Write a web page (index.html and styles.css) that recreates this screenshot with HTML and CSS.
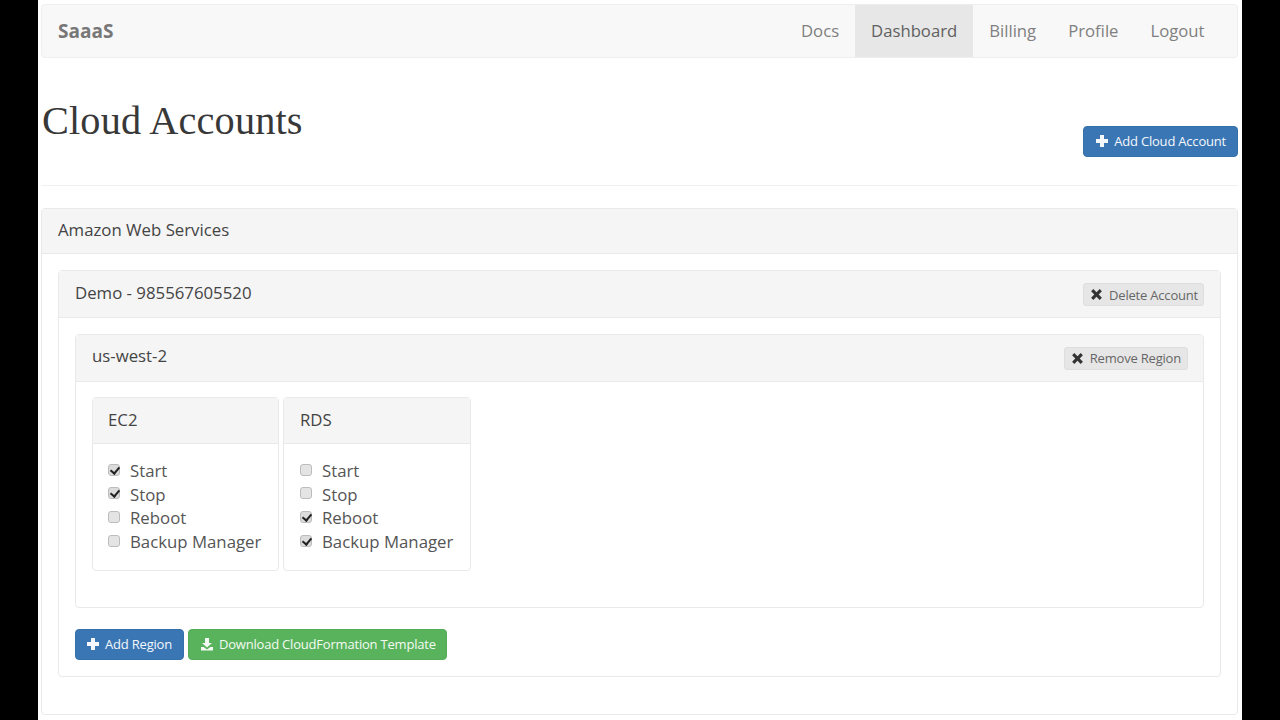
FILE: index.html
```html
<!DOCTYPE html>
<html lang="en">
<head>
<meta charset="utf-8">
<title>Cloud Accounts</title>
<link rel="stylesheet" href="styles.css">
</head>
<body>
<svg class="defs" width="0" height="0" aria-hidden="true">
  <symbol id="i-plus" viewBox="0 0 14 14"><path d="M5 1h4v4h4v4H9v4H5V9H1V5h4z"/></symbol>
  <symbol id="i-x" viewBox="0 0 14 14"><path d="M3.6 1.2 7 4.6l3.4-3.4 2.4 2.4L9.4 7l3.4 3.4-2.4 2.4L7 9.4l-3.4 3.4-2.4-2.4L4.6 7 1.2 3.6z"/></symbol>
  <symbol id="i-down" viewBox="0 0 14 14"><path d="M5 1h4v5h3L7 10.6 2 6h3zM1 10h2.6L7 12.6 10.4 10H13v3.4H1z"/></symbol>
</svg>
<div class="page">
  <nav class="navbar">
    <a class="brand">SaaaS</a>
    <ul class="nav">
      <li><a>Docs</a></li>
      <li class="active"><a>Dashboard</a></li>
      <li><a>Billing</a></li>
      <li><a>Profile</a></li>
      <li><a>Logout</a></li>
    </ul>
  </nav>
  <header class="page-header">
    <h1>Cloud Accounts</h1>
    <a class="btn btn-primary btn-add-account"><svg class="ico ico-plus"><use href="#i-plus"/></svg>Add Cloud Account</a>
  </header>
  <section class="panel panel-aws">
    <div class="panel-heading heading-aws">Amazon Web Services</div>
    <div class="panel-body">
      <section class="panel panel-account">
        <div class="panel-heading heading-row"><span class="title">Demo - 985567605520</span>
          <a class="btn btn-sm btn-default"><svg class="ico ico-x"><use href="#i-x"/></svg>Delete Account</a>
        </div>
        <div class="panel-body">
          <section class="panel panel-region">
            <div class="panel-heading heading-row heading-region"><span class="title">us-west-2</span>
              <a class="btn btn-sm btn-default"><svg class="ico ico-x"><use href="#i-x"/></svg>Remove Region</a>
            </div>
            <div class="panel-body services">
              <section class="panel service service-ec2">
                <div class="panel-heading heading-service">EC2</div>
                <div class="service-body">
                  <label class="check"><input type="checkbox" checked>Start</label>
                  <label class="check"><input type="checkbox" checked>Stop</label>
                  <label class="check"><input type="checkbox">Reboot</label>
                  <label class="check"><input type="checkbox">Backup Manager</label>
                </div>
              </section>
              <section class="panel service service-rds">
                <div class="panel-heading heading-service">RDS</div>
                <div class="service-body">
                  <label class="check"><input type="checkbox">Start</label>
                  <label class="check"><input type="checkbox">Stop</label>
                  <label class="check"><input type="checkbox" checked>Reboot</label>
                  <label class="check"><input type="checkbox" checked>Backup Manager</label>
                </div>
              </section>
            </div>
          </section>
          <div class="actions">
            <a class="btn btn-primary"><svg class="ico ico-plus"><use href="#i-plus"/></svg>Add Region</a>
            <a class="btn btn-success"><svg class="ico ico-plus"><use href="#i-down"/></svg>Download CloudFormation Template</a>
          </div>
        </div>
      </section>
    </div>
  </section>
</div>
</body>
</html>
```
FILE: styles.css
```css
* { box-sizing: border-box; }
html, body { margin: 0; height: 720px; overflow: hidden; background: #000; }
body { font-family: "Open Sans", "Liberation Sans", sans-serif; font-size: 16px; color: #333; }
.defs { position: absolute; }
.page { width: 1204px; height: 720px; margin-left: 38px; padding: 4px 4px 0 3px; background: #fff; overflow: hidden; }

.navbar { display: flex; justify-content: space-between; height: 54px; background: #f8f8f8; border: 1px solid #eeeeee; border-radius: 4px; }
.brand { padding: 0 16px; line-height: 52px; font-size: 19px; font-weight: 700; color: #777; }
.nav { display: flex; list-style: none; margin: 0 16.5px 0 0; padding: 0; }
.nav a { display: block; padding: 0 16px; line-height: 52px; font-size: 16.7px; color: #808080; }
.nav .active a { background: #e7e7e7; color: #606060; }

.page-header { display: flex; justify-content: space-between; align-items: flex-end; height: 128px; padding-bottom: 28px; border-bottom: 1px solid #f0f0f0; }
h1 { margin: 0 0 14px 1px; font-family: "Liberation Serif", serif; font-size: 40.3px; letter-spacing: 0.15px; font-weight: 400; line-height: 44px; color: #383838; }

.btn { display: inline-flex; align-items: center; height: 31px; padding: 0 11px 2px 10px; border: 1px solid transparent; border-radius: 4px; font-size: 13px; letter-spacing: -0.2px; white-space: nowrap; }
.btn-primary { background: #3a76b4; border-color: #3670ab; color: #f4f7fb; }
.btn-add-account { padding-left: 11px; }
.btn-success { padding: 0 10px 2px 11px; background: #59b35c; border-color: #53ad56; color: #f4faf4; }
.btn-sm { height: 23px; padding: 1px 5px 0 6px; border-radius: 3px; color: #666; }
.heading-region .btn-sm { height: 23px; padding: 0 6px 0; }
.btn-default { background: #e6e6e6; border-color: #dedede; }
.ico { width: 14px; height: 14px; fill: currentColor; flex: none; }
.ico-plus { margin-right: 5px; }
.ico-x { margin-right: 6px; width: 13px; height: 13px; fill: #333; }

.panel { background: #fff; border: 1px solid #e9e9e9; border-radius: 4px; }
.panel-heading { background: #f5f5f5; border-bottom: 1px solid #e9e9e9; font-size: 16.8px; color: #444; }
.panel-body { padding: 16px; }

.panel-aws { margin-top: 22px; height: 507px; }
.heading-aws { height: 45px; padding: 0 16px; line-height: 41px; }
.panel-account { height: 407px; }
.heading-row { display: flex; justify-content: space-between; align-items: center; height: 47px; padding: 0 16px; }
.heading-region { padding-right: 15px; }
.title { padding-bottom: 4px; }
.heading-region .title { padding-bottom: 6px; }
.panel-region { height: 274px; }
.services { display: flex; gap: 4px; padding: 15px 16px 0; }
.service { height: 174px; }
.service-ec2 { width: 187px; }
.service-rds { width: 188px; }
.heading-service { height: 46px; padding: 0 15px; line-height: 43px; }
.service-rds .heading-service { padding-left: 16px; }
.service-body { display: flex; flex-direction: column; padding: 15px 15px 0; }
.service-rds .service-body { padding-left: 16px; }
.check { display: flex; align-items: center; height: 23.6px; font-size: 16.8px; color: #555; }
.check input { appearance: none; position: relative; width: 12px; height: 12px; margin: 0 10px 0 0; flex: none; background: #e4e4e4; border: 1px solid #bcbcbc; border-radius: 3px; transform: translateY(-1px); }
.check input:checked { background: #dcdcdc; }
.check input:checked::after { content: ""; position: absolute; left: 3px; top: 0; width: 4px; height: 7px; border: solid #222; border-width: 0 2px 2px 0; transform: rotate(40deg); }

.actions { display: flex; gap: 4px; margin-top: 21px; }
```
